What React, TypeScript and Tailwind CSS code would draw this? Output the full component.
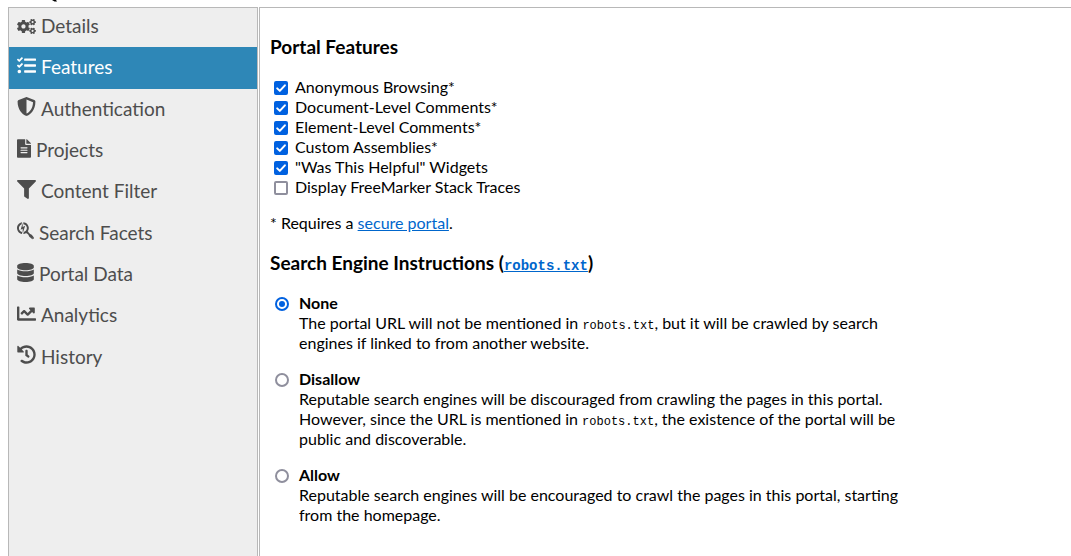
import {
  FaChartLine,
  FaCogs,
  FaDatabase,
  FaFileAlt,
  FaFilter,
  FaHistory,
  FaSearchengin,
  FaShieldAlt,
  FaTasks,
} from 'react-icons/fa';
import { useState } from 'react';
import type { ReactNode } from 'react';

const navItems = [
  { label: 'Details', icon: FaCogs, size: 'w-[19px] h-[15px]' },
  { label: 'Features', icon: FaTasks, size: 'size-[19px]' },
  { label: 'Authentication', icon: FaShieldAlt, size: 'size-[19px]' },
  { label: 'Projects', icon: FaFileAlt, size: 'w-[14px] h-[19px]' },
  { label: 'Content Filter', icon: FaFilter, size: 'size-[19px]' },
  { label: 'Search Facets', icon: FaSearchengin, size: 'w-[17px] h-[19px]' },
  { label: 'Portal Data', icon: FaDatabase, size: 'w-[17px] h-[19px]' },
  { label: 'Analytics', icon: FaChartLine, size: 'size-[19px]' },
  { label: 'History', icon: FaHistory, size: 'size-[19px]' },
];

const features = [
  { id: 'anonymous', label: 'Anonymous Browsing*', checked: true },
  { id: 'document-comments', label: 'Document-Level Comments*', checked: true },
  { id: 'element-comments', label: 'Element-Level Comments*', checked: true },
  { id: 'assemblies', label: 'Custom Assemblies*', checked: true },
  { id: 'helpful', label: '"Was This Helpful" Widgets', checked: true },
  { id: 'stack-traces', label: 'Display FreeMarker Stack Traces', checked: false },
];

function Code({ children }: { children: ReactNode }) {
  return <code className="font-['Liberation_Mono',monospace] text-[12px] leading-none">{children}</code>;
}

const robotOptions = [
  {
    id: 'none',
    label: 'None',
    text: (
      <>
        The portal URL will not be mentioned in <Code>robots.txt</Code>, but it will be crawled by search engines if
        linked to from another website.
      </>
    ),
  },
  {
    id: 'disallow',
    label: 'Disallow',
    text: (
      <>
        Reputable search engines will be discouraged from crawling the pages in this portal. However, since the URL is
        mentioned in <Code>robots.txt</Code>, the existence of the portal will be public and discoverable.
      </>
    ),
  },
  {
    id: 'allow',
    label: 'Allow',
    text: 'Reputable search engines will be encouraged to crawl the pages in this portal, starting from the homepage.',
  },
];

function Sidebar() {
  return (
    <nav className="w-[250px] shrink-0 overflow-hidden border border-b-0 border-[#b8b8b8] bg-[#eeeeee]">
      <ul className="-mt-0.5 grid h-[372px] grid-rows-9">
        {navItems.map(({ label, icon: Icon, size }) => (
          <li key={label}>
            <a
              href="#"
              className={`flex h-full items-center gap-[5px] px-2 pb-px text-[19px] leading-6 ${
                label === 'Features' ? 'bg-[#2e87b7] text-white' : 'text-[#4d4d4d]'
              }`}
            >
              <span className="mb-1 flex h-[19px] shrink-0 items-end">
                <Icon className={size} />
              </span>
              {label}
            </a>
          </li>
        ))}
      </ul>
    </nav>
  );
}

function FeatureCheckbox({ id, label, checked }: { id: string; label: string; checked: boolean }) {
  return (
    <div className="flex items-center gap-[7px]">
      <span className="relative mt-0.5 flex">
        <input
          id={id}
          type="checkbox"
          defaultChecked={checked}
          className="peer size-[14px] appearance-none rounded-[2px] border-2 border-[#8f8f9d] bg-white checked:border-[#0061e0] checked:bg-[#0061e0]"
        />
        <svg
          viewBox="0 0 14 14"
          className="pointer-events-none absolute inset-0 hidden size-[14px] fill-none stroke-white stroke-2 peer-checked:block"
        >
          <path d="M3.2 7.4 5.8 9.9 10.9 4.3" strokeLinecap="round" strokeLinejoin="round" />
        </svg>
      </span>
      <label htmlFor={id}>{label}</label>
    </div>
  );
}

export default function App() {
  const [robots, setRobots] = useState('none');

  return (
    <div className="flex min-h-screen flex-col bg-white font-['Lato',sans-serif] text-[16px] leading-5 text-black">
      <div className="h-[7px] shrink-0 pl-[52px]">
        <svg viewBox="0 0 5 2" className="h-0.5 w-[5px]">
          <path d="M0 0H4L5 1.5H2.5Z" fill="#000" />
        </svg>
      </div>
      <div className="flex flex-1 gap-px pl-2">
        <Sidebar />
        <main className="flex-1 border-t border-l border-[#b8b8b8] px-[10px] pt-[29px]">
          <h2 className="text-[19px] leading-5 font-bold">Portal Features</h2>
          <div className="mt-5 pl-1">
            {features.map((feature) => (
              <FeatureCheckbox key={feature.id} {...feature} />
            ))}
          </div>
          <p className="mt-4">
            * Requires a{' '}
            <a href="#" className="text-[#0066cc] underline">
              secure portal
            </a>
            .
          </p>

          <h2 className="mt-5 text-[19px] leading-5 font-bold">
            Search Engine Instructions (
            <a href="#" className="font-['Liberation_Mono',monospace] text-[14px] leading-none text-[#0066cc] underline">
              robots.txt
            </a>
            )
          </h2>
          <div className="mt-5 max-w-[640px] space-y-4 pl-[5px]">
            {robotOptions.map(({ id, label, text }) => (
              <div key={id} className="flex items-start gap-[10px]">
                <input
                  id={id}
                  type="radio"
                  name="robots"
                  checked={robots === id}
                  onChange={() => setRobots(id)}
                  className="mt-1 size-[14px] shrink-0 appearance-none rounded-full border-2 border-[#8f8f9d] bg-white bg-clip-content p-0.5 checked:border-[#0061e0] checked:bg-[#0061e0]"
                />
                <div>
                  <label htmlFor={id} className="block font-bold">
                    {label}
                  </label>
                  <p>{text}</p>
                </div>
              </div>
            ))}
          </div>
        </main>
      </div>
    </div>
  );
}
